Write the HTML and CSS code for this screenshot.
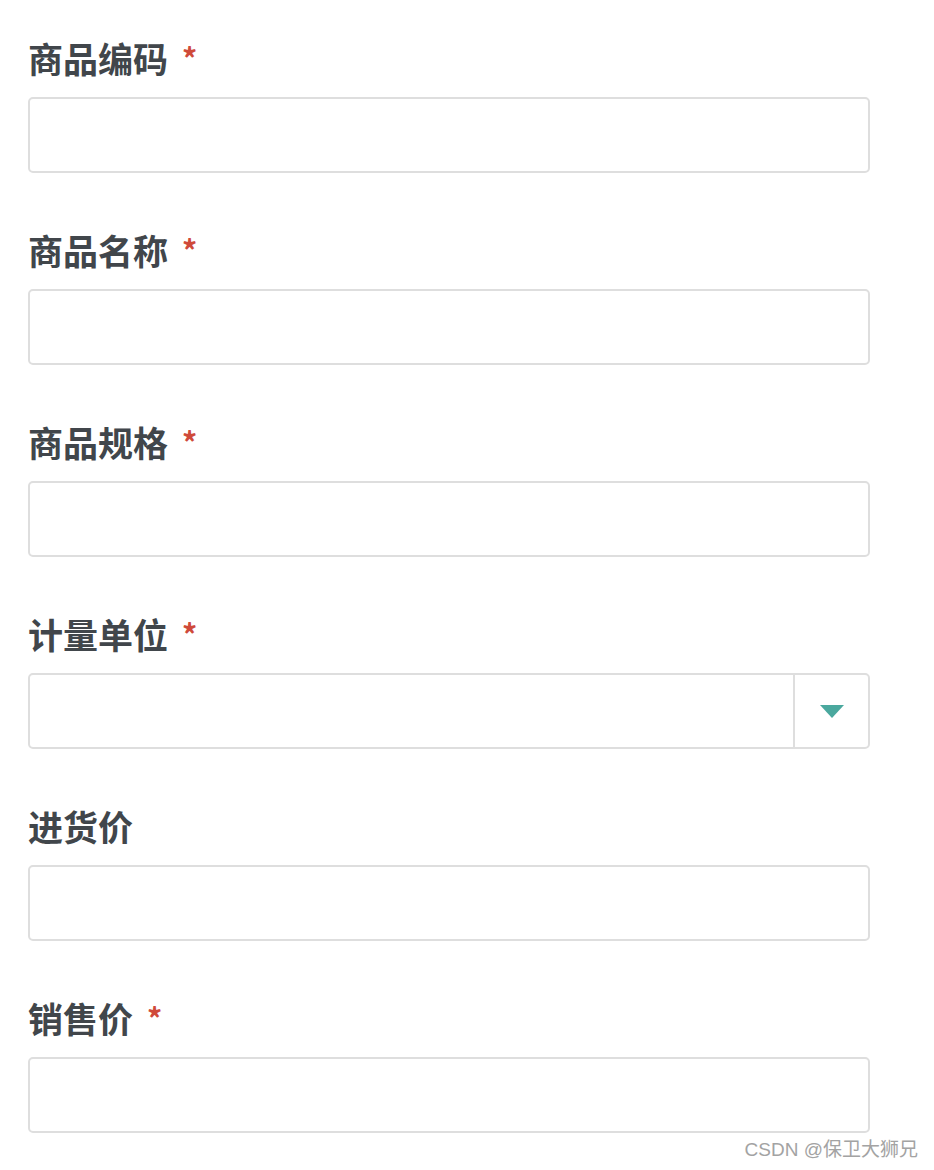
FILE: index.html
```html
<!DOCTYPE html>
<html lang="zh">
<head>
<meta charset="utf-8">
<link rel="stylesheet" href="styles.css">
</head>
<body>
<form class="form">
  <div class="field">
    <label class="label">商品编码<span class="req">*</span></label>
    <div class="input"></div>
  </div>
  <div class="field">
    <label class="label">商品名称<span class="req">*</span></label>
    <div class="input"></div>
  </div>
  <div class="field">
    <label class="label">商品规格<span class="req">*</span></label>
    <div class="input"></div>
  </div>
  <div class="field">
    <label class="label">计量单位<span class="req">*</span></label>
    <div class="input select">
      <div class="select-value"></div>
      <div class="select-btn"><span class="caret"></span></div>
    </div>
  </div>
  <div class="field">
    <label class="label">进货价</label>
    <div class="input"></div>
  </div>
  <div class="field">
    <label class="label">销售价<span class="req">*</span></label>
    <div class="input"></div>
  </div>
</form>
<div class="watermark">CSDN @保卫大狮兄</div>
</body>
</html>
```

FILE: styles.css
```css
html, body {
  margin: 0;
  padding: 0;
  background: #ffffff;
}
body {
  width: 934px;
  height: 1170px;
  position: relative;
  font-family: "Noto Sans CJK SC", "Noto Sans", sans-serif;
}
.form {
  display: flex;
  flex-direction: column;
  gap: 59px;
  padding: 40px 0 0 28px;
  width: 842px;
}
.field {
  display: flex;
  flex-direction: column;
  gap: 17px;
}
.label {
  box-sizing: border-box;
  display: flex;
  align-items: center;
  height: 40px;
  padding-bottom: 5px;
  font-size: 35px;
  line-height: 35px;
  font-weight: 600;
  color: #41464b;
}
.req {
  color: #cf4a3a;
  font-size: 30px;
  font-weight: 700;
  margin-left: 14px;
  line-height: 30px;
  align-self: flex-start;
  margin-top: 2px;
}
.input {
  box-sizing: border-box;
  height: 76px;
  width: 842px;
  border: 2px solid #dedede;
  border-radius: 5px;
  background: #fff;
}
.select {
  display: flex;
}
.select-value {
  flex: 1;
}
.select-btn {
  width: 73px;
  border-left: 2px solid #dedede;
  display: flex;
  align-items: center;
  justify-content: center;
}
.caret {
  width: 0;
  height: 0;
  border-left: 12px solid transparent;
  border-right: 12px solid transparent;
  border-top: 13px solid #4aa89e;
}
.watermark {
  position: absolute;
  right: 16px;
  top: 1137px;
  font-family: "Liberation Sans", "Noto Sans CJK SC", sans-serif;
  font-size: 19px;
  line-height: 26px;
  color: #a3a3a3;
}
```
